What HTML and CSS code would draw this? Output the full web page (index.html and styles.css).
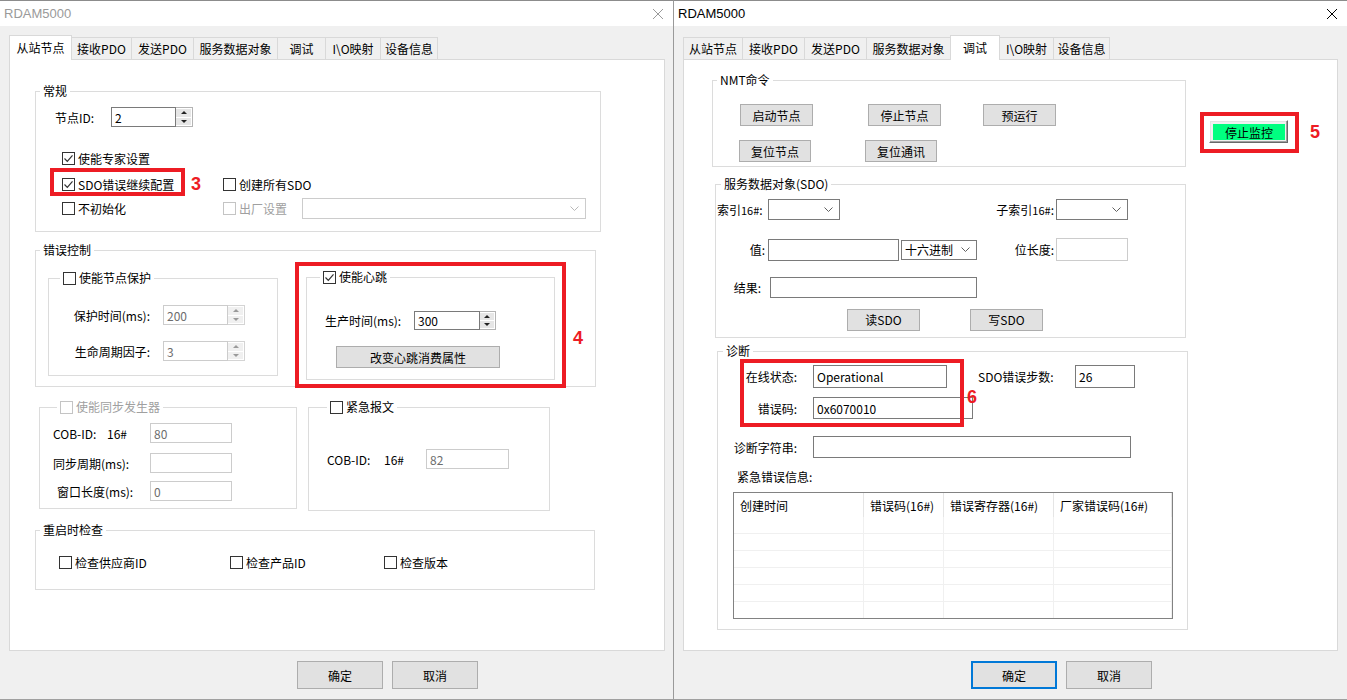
FILE: index.html
```html
<!DOCTYPE html>
<html lang="zh-CN">
<head>
    <meta charset="UTF-8">
    <title>RDAM5000</title>
    <link rel="stylesheet" href="styles.css">
</head>
<body>
<div class="screen">

    <!-- 左侧对话框：从站节点 -->
    <div class="window win-a inactive">
        <div class="titlebar">
            <span class="title">RDAM5000</span>
            <svg class="close" width="10" height="10" viewBox="0 0 10 10"><path d="M0 0L10 10M10 0L0 10"/></svg>
        </div>
        <div class="client">
            <div class="tabs">
                <div class="tab sel">从站节点</div>
                <div class="tab">接收PDO</div>
                <div class="tab">发送PDO</div>
                <div class="tab">服务数据对象</div>
                <div class="tab">调试</div>
                <div class="tab">I\O映射</div>
                <div class="tab">设备信息</div>
            </div>
            <div class="panel">
                <div class="group g-general">
                    <div class="gt">常规</div>
                    <div class="row r-nodeid">
                        <span class="lbl">节点ID:</span>
                        <div class="spin">
                            <input class="edit w65" type="text" value="2">
                            <span class="spin-btn"><i class="up"></i><i class="dn"></i></span>
                        </div>
                    </div>
                    <div class="row r-cb1">
                        <span class="cb-item"><span class="cb on"><svg width="11" height="11" viewBox="0 0 11 11"><path d="M1.5 5.5l2.8 2.8 5.2-6"/></svg></span>使能专家设置</span>
                    </div>
                    <div class="row r-cb2">
                        <span class="cb-item col-161"><span class="cb on"><svg width="11" height="11" viewBox="0 0 11 11"><path d="M1.5 5.5l2.8 2.8 5.2-6"/></svg></span>SDO错误继续配置</span>
                        <span class="cb-item"><span class="cb"></span>创建所有SDO</span>
                        <div class="mark m3"></div>
                        <span class="num n3">3</span>
                    </div>
                    <div class="row r-cb3">
                        <span class="cb-item col-161"><span class="cb"></span>不初始化</span>
                        <span class="cb-item col-79 dis"><span class="cb"></span>出厂设置</span>
                        <div class="combo dis w284">
                            <span></span>
                            <svg width="9" height="5" viewBox="0 0 9 5"><path d="M0.5 0.5l4 4 4-4"/></svg>
                        </div>
                    </div>
                </div>

                <div class="group g-error">
                    <div class="gt">错误控制</div>
                    <div class="pair">
                        <div class="group g-guard">
                            <div class="gt"><span class="cb"></span>使能节点保护</div>
                            <div class="row r-guard1">
                                <span class="lbl">保护时间(ms):</span>
                                <div class="spin dis">
                                    <input class="edit w65" type="text" value="200" disabled>
                                    <span class="spin-btn"><i class="up"></i><i class="dn"></i></span>
                                </div>
                            </div>
                            <div class="row r-guard2">
                                <span class="lbl">生命周期因子:</span>
                                <div class="spin dis">
                                    <input class="edit w65" type="text" value="3" disabled>
                                    <span class="spin-btn"><i class="up"></i><i class="dn"></i></span>
                                </div>
                            </div>
                        </div>
                        <div class="group g-heart">
                            <div class="gt"><span class="cb on"><svg width="11" height="11" viewBox="0 0 11 11"><path d="M1.5 5.5l2.8 2.8 5.2-6"/></svg></span>使能心跳</div>
                            <div class="row r-heart">
                                <span class="lbl">生产时间(ms):</span>
                                <div class="spin">
                                    <input class="edit w66" type="text" value="300">
                                    <span class="spin-btn w16"><i class="up"></i><i class="dn"></i></span>
                                </div>
                            </div>
                            <button class="btn btn-heart">改变心跳消费属性</button>
                            <div class="mark m4"></div>
                            <span class="num n4">4</span>
                        </div>
                    </div>
                </div>

                <div class="pair2">
                    <div class="group g-sync">
                        <div class="gt dis"><span class="cb"></span>使能同步发生器</div>
                        <div class="row r-sync1">
                            <span class="lbl w54">COB-ID:</span>
                            <span class="lbl w43">16#</span>
                            <input class="edit w82" type="text" value="80" disabled>
                        </div>
                        <div class="row r-sync2">
                            <span class="lbl w97">同步周期(ms):</span>
                            <input class="edit w82" type="text" value="" disabled>
                        </div>
                        <div class="row r-sync3">
                            <span class="lbl w97 ind4">窗口长度(ms):</span>
                            <input class="edit w82" type="text" value="0" disabled>
                        </div>
                    </div>
                    <div class="group g-emcy">
                        <div class="gt"><span class="cb"></span>紧急报文</div>
                        <div class="row r-emcy">
                            <span class="lbl w57">COB-ID:</span>
                            <span class="lbl w42">16#</span>
                            <input class="edit w83" type="text" value="82" disabled>
                        </div>
                    </div>
                </div>

                <div class="group g-restart">
                    <div class="gt">重启时检查</div>
                    <div class="row r-restart">
                        <span class="cb-item col-171"><span class="cb"></span>检查供应商ID</span>
                        <span class="cb-item col-154"><span class="cb"></span>检查产品ID</span>
                        <span class="cb-item"><span class="cb"></span>检查版本</span>
                    </div>
                </div>
            </div>
            <div class="dlg-buttons">
                <button class="btn btn-dlg">确定</button>
                <button class="btn btn-dlg">取消</button>
            </div>
        </div>
    </div>

    <!-- 右侧对话框：调试 -->
    <div class="window win-b">
        <div class="titlebar">
            <span class="title">RDAM5000</span>
            <svg class="close" width="10" height="10" viewBox="0 0 10 10"><path d="M0 0L10 10M10 0L0 10"/></svg>
        </div>
        <div class="client">
            <div class="tabs">
                <div class="tab">从站节点</div>
                <div class="tab">接收PDO</div>
                <div class="tab">发送PDO</div>
                <div class="tab">服务数据对象</div>
                <div class="tab sel">调试</div>
                <div class="tab">I\O映射</div>
                <div class="tab">设备信息</div>
            </div>
            <div class="panel">
                <div class="top-row">
                    <div class="group g-nmt">
                        <div class="gt">NMT命令</div>
                        <div class="row r-nmt1">
                            <button class="btn w73">启动节点</button>
                            <button class="btn w73 ml55">停止节点</button>
                            <button class="btn w73 ml42">预运行</button>
                        </div>
                        <div class="row r-nmt2">
                            <button class="btn w72">复位节点</button>
                            <button class="btn w72 ml54">复位通讯</button>
                        </div>
                    </div>
                    <div class="stop-wrap">
                        <button class="stop"><span>停止监控</span></button>
                        <div class="mark m5"></div>
                        <span class="num n5">5</span>
                    </div>
                </div>

                <div class="group g-sdo">
                    <div class="gt">服务数据对象(SDO)</div>
                    <div class="row r-sdo1">
                        <span class="lbl w51">索引<small>16#</small>:</span>
                        <div class="combo w72">
                            <span></span>
                            <svg width="9" height="5" viewBox="0 0 9 5"><path d="M0.5 0.5l4 4 4-4"/></svg>
                        </div>
                        <span class="lbl lbl-sub">子索引<small>16#</small>:</span>
                        <div class="combo w72">
                            <span></span>
                            <svg width="9" height="5" viewBox="0 0 9 5"><path d="M0.5 0.5l4 4 4-4"/></svg>
                        </div>
                    </div>
                    <div class="row r-sdo2">
                        <span class="lbl lbl-val">值:</span>
                        <input class="edit w131 h22" type="text" value="">
                        <div class="combo w76 h20 ml2">
                            <span>十六进制</span>
                            <svg width="9" height="5" viewBox="0 0 9 5"><path d="M0.5 0.5l4 4 4-4"/></svg>
                        </div>
                        <span class="lbl lbl-bits">位长度:</span>
                        <input class="edit w72 h23" type="text" value="" disabled>
                    </div>
                    <div class="row r-sdo3">
                        <span class="lbl lbl-res">结果:</span>
                        <input class="edit w207 h21" type="text" value="">
                    </div>
                    <div class="row r-sdo4">
                        <button class="btn w73">读SDO</button>
                        <button class="btn w73 ml50">写SDO</button>
                    </div>
                </div>

                <div class="group g-diag">
                    <div class="gt">诊断</div>
                    <div class="diag-top">
                        <div class="row r-diag1">
                            <span class="lbl lbl-diag">在线状态:</span>
                            <input class="edit w134 h23" type="text" value="Operational" readonly>
                            <span class="lbl lbl-steps">SDO错误步数:</span>
                            <input class="edit w60 h23" type="text" value="26" readonly>
                        </div>
                        <div class="row r-diag2">
                            <span class="lbl lbl-diag">错误码:</span>
                            <input class="edit w160 h22" type="text" value="0x6070010" readonly>
                        </div>
                        <div class="mark m6"></div>
                        <span class="num n6">6</span>
                    </div>
                    <div class="row r-diag3">
                        <span class="lbl lbl-diag">诊断字符串:</span>
                        <input class="edit w318 h22" type="text" value="" readonly>
                    </div>
                    <div class="row r-diag4">紧急错误信息:</div>
                    <div class="lv">
                        <div class="lv-h">创建时间</div>
                        <div class="lv-h">错误码(16#)</div>
                        <div class="lv-h">错误寄存器(16#)</div>
                        <div class="lv-h">厂家错误码(16#)</div>
                        <div class="lv-c"></div><div class="lv-c"></div><div class="lv-c"></div><div class="lv-c"></div>
                        <div class="lv-c"></div><div class="lv-c"></div><div class="lv-c"></div><div class="lv-c"></div>
                        <div class="lv-c"></div><div class="lv-c"></div><div class="lv-c"></div><div class="lv-c"></div>
                        <div class="lv-c"></div><div class="lv-c"></div><div class="lv-c"></div><div class="lv-c"></div>
                        <div class="lv-c"></div><div class="lv-c"></div><div class="lv-c"></div><div class="lv-c"></div>
                        <div class="lv-c"></div><div class="lv-c"></div><div class="lv-c"></div><div class="lv-c"></div>
                    </div>
                </div>
            </div>
            <div class="dlg-buttons">
                <button class="btn btn-dlg default">确定</button>
                <button class="btn btn-dlg">取消</button>
            </div>
        </div>
    </div>

</div>
</body>
</html>
```

FILE: styles.css
```css
* {
    box-sizing: border-box;
}
body {
    margin: 0;
    font-family: "Noto Sans CJK SC", "Noto Sans", sans-serif;
    font-size: 12px;
    color: #000;
    background: #fff;
}
.screen {
    display: flex;
    width: 1347px;
    height: 700px;
    overflow: hidden;
}

/* 窗口 */
.window {
    width: 673px;
    height: 700px;
    border-top: 1px solid #8c8c8c;
    border-bottom: 1px solid #a0a0a0;
    background: #f0f0f0;
    display: flex;
    flex-direction: column;
}
.win-a {
    width: 674px;
    border-right: 1px solid #9a9a9a;
}
.titlebar {
    height: 25px;
    flex: none;
    background: #fff;
    display: flex;
    align-items: center;
    justify-content: space-between;
    padding: 0 10px 0 4px;
}
.title {
    font-family: "Liberation Sans", Arial, sans-serif;
    font-size: 13px;
    color: #000;
}
.close path {
    stroke: #000;
    stroke-width: 1;
}
.inactive .title {
    color: #9a9a9a;
}
.inactive .close path {
    stroke: #9a9a9a;
}
.client {
    flex: 1;
    padding: 9px 0 0 9px;
}

/* 选项卡 */
.tabs {
    display: flex;
    align-items: flex-end;
    height: 24px;
}
.tab {
    height: 22px;
    border: 1px solid #d9d9d9;
    border-right: 0;
    border-bottom: 0;
    background: #f0f0f0;
    display: flex;
    align-items: center;
    justify-content: center;
    white-space: nowrap;
}
.tab:last-child {
    border-right: 1px solid #d9d9d9;
}
.tab.sel {
    height: 25px;
    margin-bottom: -1px;
    background: #fff;
    border-right: 1px solid #d9d9d9;
    position: relative;
    z-index: 1;
    padding-bottom: 2px;
}
.tab.sel + .tab {
    border-left: 0;
}
.win-a .tab:nth-child(1) { width: 63px; }
.win-a .tab:nth-child(2) { width: 59px; }
.win-a .tab:nth-child(3) { width: 62px; }
.win-a .tab:nth-child(4) { width: 84px; }
.win-a .tab:nth-child(5) { width: 48px; }
.win-a .tab:nth-child(6) { width: 55px; }
.win-a .tab:nth-child(7) { width: 58px; }
.win-b .tab:nth-child(1) { width: 59px; }
.win-b .tab:nth-child(2) { width: 62px; }
.win-b .tab:nth-child(3) { width: 62px; }
.win-b .tab:nth-child(4) { width: 84px; }
.win-b .tab:nth-child(5) { width: 50px; }
.win-b .tab:nth-child(6) { width: 53px; }
.win-b .tab:nth-child(7) { width: 57px; }

.panel {
    width: 655px;
    height: 592px;
    background: #fff;
    border: 1px solid #d9d9d9;
}
.win-a .panel {
    width: 656px;
}

/* 底部按钮 */
.dlg-buttons {
    display: flex;
    gap: 9px;
    margin: 10px 0 0 288px;
}
.btn {
    font: inherit;
    color: #000;
    background: #e1e1e1;
    border: 1px solid #adadad;
    padding: 0;
    height: 22px;
    white-space: nowrap;
}
.btn-dlg {
    width: 86px;
    height: 28px;
}
.btn-dlg.default {
    border: 2px solid #0078d7;
}

/* 分组框 */
.group {
    border: 1px solid #dcdcdc;
}
.gt {
    display: flex;
    align-items: center;
    width: max-content;
    height: 16px;
    line-height: 16px;
    margin: -9px 0 0 4px;
    padding: 0 3px;
    background: #fff;
}
.gt.dis,
.cb-item.dis {
    color: #a0a0a0;
}
.row {
    display: flex;
    align-items: center;
}
.lbl {
    white-space: nowrap;
    flex: none;
}
.lbl small {
    font-size: 11px;
}

/* 复选框 */
.cb-item {
    display: flex;
    align-items: center;
    white-space: nowrap;
}
.cb {
    width: 13px;
    height: 13px;
    flex: none;
    border: 1px solid #333;
    background: #fff;
    margin-right: 3px;
    display: flex;
    align-items: center;
    justify-content: center;
}
.cb svg path {
    fill: none;
    stroke: #333;
    stroke-width: 1.2;
}
.dis .cb {
    border-color: #c4c4c4;
}

/* 编辑框 */
.edit {
    font: inherit;
    color: #000;
    height: 20px;
    border: 1px solid #7a7a7a;
    background: #fff;
    padding: 0 3px;
    outline: none;
    flex: none;
}
.edit:disabled {
    background: #fff;
    border-color: #cccccc;
    color: #6d6d6d;
}
.spin {
    display: flex;
    height: 100%;
}
.spin .edit {
    height: 100%;
}
.spin-btn {
    width: 17px;
    display: flex;
    flex-direction: column;
    border: 1px solid #b4b4b4;
    border-left: 0;
    background: #fff;
    padding: 1px 1px 1px 0;
    gap: 1px;
}
.spin-btn.w16 {
    width: 16px;
}
.spin-btn i {
    flex: 1;
    background: #e6e6e6;
    display: flex;
    align-items: center;
    justify-content: center;
}
.spin-btn i::before {
    content: "";
    border-left: 3px solid transparent;
    border-right: 3px solid transparent;
}
.spin-btn .up::before {
    border-bottom: 3px solid #222;
}
.spin-btn .dn::before {
    border-top: 3px solid #222;
}
.spin.dis .spin-btn {
    border-color: #d4d4d4;
}
.spin.dis .spin-btn i {
    background: #f0f0f0;
}
.spin.dis .spin-btn .up::before {
    border-bottom-color: #9a9a9a;
}
.spin.dis .spin-btn .dn::before {
    border-top-color: #9a9a9a;
}

/* 组合框 */
.combo {
    height: 21px;
    flex: none;
    border: 1px solid #7a7a7a;
    background: #fff;
    display: flex;
    align-items: center;
    justify-content: space-between;
    padding: 0 6px 0 3px;
}
.combo svg path {
    fill: none;
    stroke: #606060;
}
.combo.dis {
    border-color: #cccccc;
}
.combo.dis svg path {
    stroke: #b8b8b8;
}

/* 尺寸 */
.w42 { width: 42px; }
.w43 { width: 43px; }
.w51 { width: 51px; }
.w54 { width: 54px; }
.w57 { width: 57px; }
.w60 { width: 60px; }
.w65 { width: 65px; }
.w66 { width: 66px; }
.w72 { width: 72px; }
.w73 { width: 73px; }
.w76 { width: 76px; }
.w82 { width: 82px; }
.w83 { width: 83px; }
.w97 { width: 97px; }
.w131 { width: 131px; }
.w134 { width: 134px; }
.w160 { width: 160px; }
.w207 { width: 207px; }
.w284 { width: 284px; }
.w318 { width: 318px; }
.h20 { height: 20px; }
.h21 { height: 21px; }
.h22 { height: 22px; }
.h23 { height: 23px; }
.ml2 { margin-left: 2px; }
.ml42 { margin-left: 42px; }
.ml50 { margin-left: 50px; }
.ml54 { margin-left: 54px; }
.ml55 { margin-left: 55px; }
.col-79 { width: 79px; }
.col-154 { width: 154px; }
.col-161 { width: 161px; }
.col-171 { width: 171px; }
.ind4 { padding-left: 4px; }

/* 从站节点页 */
.g-general {
    margin: 31px 0 0 25px;
    width: 566px;
    height: 141px;
}
.r-nodeid {
    margin-top: 8px;
    height: 20px;
    padding-left: 19px;
}
.r-nodeid .lbl {
    width: 56px;
}
.r-cb1 {
    margin-top: 21px;
    height: 20px;
    padding-left: 26px;
}
.r-cb2 {
    margin-top: 6px;
    height: 20px;
    padding-left: 26px;
    position: relative;
}
.r-cb3 {
    margin-top: 4px;
    height: 21px;
    padding-left: 26px;
}
.g-error {
    margin: 18px 0 0 25px;
    width: 561px;
    height: 137px;
}
.pair {
    display: flex;
    align-items: flex-start;
}
.g-guard {
    margin: 20px 0 0 12px;
    width: 230px;
    height: 98px;
}
.g-guard .gt {
    margin-left: 11px;
}
.r-guard1 {
    margin-top: 19px;
    height: 20px;
}
.r-guard2 {
    margin-top: 16px;
    height: 20px;
}
.g-guard .lbl {
    width: 103px;
    text-align: right;
    padding-right: 2px;
    margin-right: 11px;
}
.g-heart {
    margin: 19px 0 0 28px;
    width: 249px;
    height: 103px;
    position: relative;
}
.g-heart .gt {
    margin-left: 13px;
}
.r-heart {
    margin-top: 26px;
    height: 19px;
    padding-left: 18px;
}
.r-heart .lbl {
    width: 89px;
}
.btn-heart {
    display: block;
    margin: 16px 0 0 29px;
    width: 164px;
    height: 22px;
}
.pair2 {
    display: flex;
    align-items: flex-start;
    margin-top: 20px;
}
.g-sync {
    margin-left: 29px;
    width: 258px;
    height: 102px;
}
.g-sync .gt {
    margin-left: 17px;
}
.r-sync1 {
    margin-top: 8px;
    height: 20px;
    padding-left: 13px;
}
.r-sync2 {
    margin-top: 10px;
    height: 20px;
    padding-left: 13px;
}
.r-sync3 {
    margin-top: 8px;
    height: 20px;
    padding-left: 13px;
}
.g-emcy {
    margin-left: 11px;
    width: 242px;
    height: 104px;
}
.g-emcy .gt {
    margin-left: 18px;
}
.r-emcy {
    margin-top: 34px;
    height: 20px;
    padding-left: 18px;
}
.g-restart {
    margin: 19px 0 0 25px;
    width: 560px;
    height: 60px;
}
.r-restart {
    margin-top: 14px;
    height: 20px;
    padding-left: 23px;
}

/* 调试页 */
.top-row {
    display: flex;
    align-items: flex-start;
}
.g-nmt {
    margin: 20px 0 0 28px;
    width: 474px;
    height: 87px;
}
.r-nmt1 {
    margin-top: 16px;
    height: 22px;
    padding-left: 27px;
}
.r-nmt2 {
    margin-top: 14px;
    height: 22px;
    padding-left: 26px;
}
.stop-wrap {
    position: relative;
    margin: 60px 0 0 23px;
}
.stop {
    display: block;
    font: inherit;
    width: 79px;
    height: 23px;
    padding: 3px 2px 2px 3px;
    background: #f0f0f0;
    border: 1px solid;
    border-color: #fff #696969 #696969 #fff;
    box-shadow: inset -1px -1px #a0a0a0, inset 1px 1px #e3e3e3;
}
.stop span {
    display: flex;
    height: 100%;
    align-items: center;
    justify-content: center;
    background: #00ff80;
    color: #000;
}
.g-sdo {
    margin: 17px 0 0 31px;
    width: 471px;
    height: 154px;
}
.g-sdo .gt,
.g-diag .gt {
    margin-left: 5px;
}
.r-sdo1 {
    margin-top: 7px;
    height: 21px;
    padding-left: 1px;
}
.lbl-sub {
    margin-left: 150px;
    width: 66px;
    text-align: right;
    padding-right: 2px;
}
.r-sdo2 {
    margin-top: 18px;
    height: 23px;
}
.lbl-val {
    width: 52px;
    text-align: right;
    padding-right: 3px;
}
.lbl-bits {
    margin-left: 37px;
    width: 42px;
    text-align: right;
    padding-right: 2px;
}
.r-sdo3 {
    margin-top: 16px;
    height: 21px;
}
.lbl-res {
    width: 54px;
    text-align: right;
    padding-right: 9px;
}
.r-sdo4 {
    margin-top: 11px;
    height: 21px;
    padding-left: 131px;
}
.g-diag {
    margin: 13px 0 0 33px;
    width: 471px;
    height: 279px;
}
.diag-top {
    position: relative;
    margin-top: 6px;
}
.r-diag1 {
    height: 23px;
}
.r-diag2 {
    margin-top: 9px;
    height: 22px;
}
.r-diag3 {
    margin-top: 17px;
    height: 22px;
}
.r-diag4 {
    margin-top: 10px;
    height: 16px;
    padding-left: 19px;
}
.lbl-diag {
    width: 95px;
    text-align: right;
    padding-right: 16px;
}
.lbl-steps {
    margin-left: 31px;
    width: 97px;
}

/* 列表 */
.lv {
    margin: 8px 0 0 15px;
    width: 440px;
    height: 127px;
    border: 1px solid #828282;
    overflow: hidden;
    display: grid;
    grid-template-columns: 130px 80px 110px 1fr;
    grid-template-rows: 24px;
    grid-auto-rows: 17px;
}
.lv-h {
    display: flex;
    align-items: center;
    padding-left: 6px;
    border-right: 1px solid #e5e5e5;
    white-space: nowrap;
}
.lv-c {
    border-right: 1px solid #f0f0f0;
    border-bottom: 1px solid #f0f0f0;
}

/* 标注 */
.mark {
    position: absolute;
    border: 4px solid #ed1c24;
    pointer-events: none;
}
.num {
    position: absolute;
    font-family: "Liberation Sans", Arial, sans-serif;
    font-weight: bold;
    font-size: 18px;
    line-height: 18px;
    color: #ed1c24;
}
.m3 { left: 14px; top: -6px; width: 135px; height: 28px; }
.n3 { left: 155px; top: 1px; }
.m4 { left: -12px; top: -16px; width: 271px; height: 126px; }
.n4 { left: 266px; top: 51px; }
.m5 { left: -9px; top: -8px; width: 99px; height: 41px; }
.n5 { left: 101px; top: 3px; }
.m6 { left: 22px; top: -6px; width: 224px; height: 68px; }
.n6 { left: 249px; top: 23px; }
```
